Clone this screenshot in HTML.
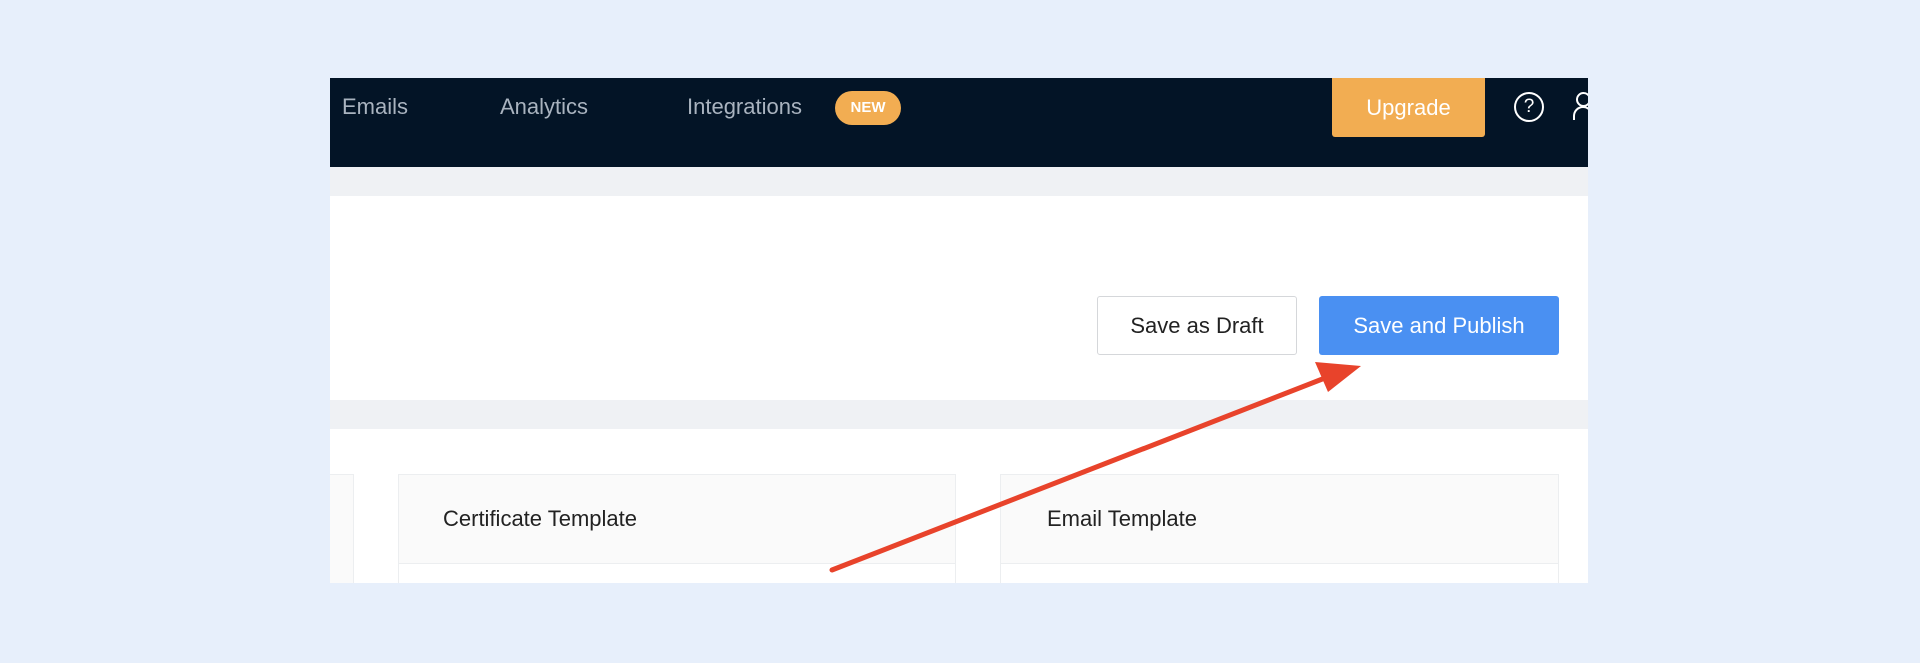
<!DOCTYPE html>
<html><head><style>
body{margin:0;width:1920px;height:663px;background:#e7effb;position:relative;overflow:hidden;font-family:"Liberation Sans",sans-serif}
.p{position:absolute}
</style></head><body>
<div class="p" style="left:330px;top:78px;width:1258px;height:505px;background:#fff;overflow:hidden">
 <div class="p" style="left:0;top:0;width:1258px;height:89px;background:#031426"></div>
 <div class="p" style="left:12px;top:16px;color:#a9b3bf;font-size:22px">Emails</div>
 <div class="p" style="left:170px;top:16px;color:#a9b3bf;font-size:22px">Analytics</div>
 <div class="p" style="left:357px;top:16px;color:#a9b3bf;font-size:22px">Integrations</div>
 <div class="p" style="left:505px;top:13px;width:66px;height:34px;border-radius:17px;background:#f2ad52;color:#fff;font-size:15px;font-weight:bold;text-align:center;line-height:34px">NEW</div>
 <div class="p" style="left:1002px;top:0;width:153px;height:59px;background:#f2ad52;color:#fff;font-size:22px;text-align:center;line-height:59px;border-radius:0 0 3px 3px">Upgrade</div>
 <div class="p" style="left:1184px;top:14px;width:26px;height:26px;border:2px solid #fff;border-radius:50%;color:#fff;font-size:19px;text-align:center;line-height:26px">?</div>
 <div class="p" style="left:1246px;top:14px;width:11px;height:11px;border:2px solid #fff;border-radius:50%"></div>
 <div class="p" style="left:1243px;top:28px;width:16px;height:12px;border:2px solid #fff;border-bottom:none;border-radius:10px 10px 0 0"></div>
 <div class="p" style="left:0;top:89px;width:1258px;height:29px;background:#eff1f4"></div>
 <div class="p" style="left:0;top:322px;width:1258px;height:29px;background:#eff1f4"></div>
 <div class="p" style="left:767px;top:218px;width:198px;height:57px;border:1px solid #d5d7da;border-radius:3px;font-size:22px;color:#222;text-align:center;line-height:57px">Save as Draft</div>
 <div class="p" style="left:989px;top:218px;width:240px;height:59px;background:#4a90f2;border-radius:3px;font-size:22px;color:#fff;text-align:center;line-height:59px">Save and Publish</div>
 <div class="p" style="left:-10px;top:396px;width:32px;height:120px;border:1px solid #eceef0;background:#fafafa"></div>
 <div class="p" style="left:68px;top:396px;width:556px;height:120px;border:1px solid #eceef0;background:#fff"><div style="height:88px;background:#fafafa;border-bottom:1px solid #eceef0;font-size:22px;color:#222;line-height:88px;padding-left:44px">Certificate Template</div></div>
 <div class="p" style="left:670px;top:396px;width:557px;height:120px;border:1px solid #eceef0;background:#fff"><div style="height:88px;background:#fafafa;border-bottom:1px solid #eceef0;font-size:22px;color:#222;line-height:88px;padding-left:46px">Email Template</div></div>
</div>
<svg class="p" style="left:0;top:0" width="1920" height="663">
<line x1="832" y1="570" x2="1325" y2="378" stroke="#e8432b" stroke-width="5" stroke-linecap="round"/>
<polygon points="1361,366 1315,362 1328,392" fill="#e8432b"/>
</svg>
</body></html>
